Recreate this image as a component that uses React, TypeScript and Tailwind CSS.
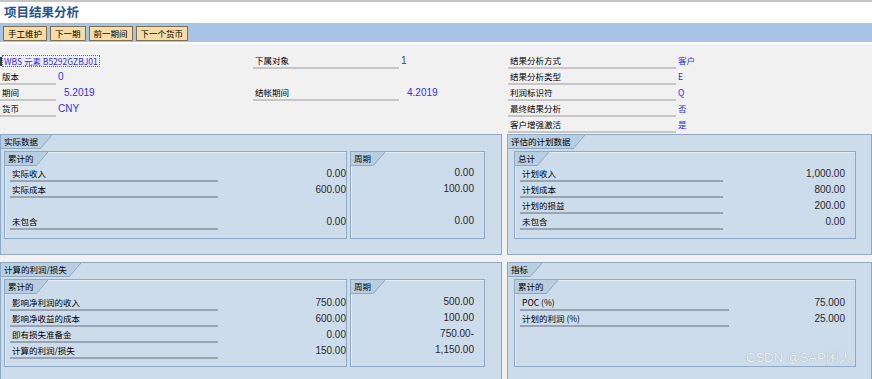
import React from 'react';

const cjk = "font-['Noto_Sans_CJK_SC',sans-serif]";
const num = "font-['Liberation_Sans',sans-serif]";

function Tab({ label }: { label: string }) {
  return (
    <div className="flex h-[14px]">
      <div className={`${cjk} bg-[#b8cfe1] border-b border-[#8fa8c3] pl-[3px] pr-[2px] text-[8.5px] leading-[13px] text-black whitespace-nowrap`}>
        {label}
      </div>
      <svg width="12" height="14" className="block">
        <polygon points="0,0 12,0 0,14" fill="#b8cfe1" />
        <line x1="12" y1="0" x2="0" y2="14" stroke="#8fa8c3" strokeWidth="1" />
      </svg>
    </div>
  );
}

function Line({ label, value, w = 208 }: { label: string; value?: string; w?: number }) {
  return (
    <div className="flex h-[16px] items-baseline">
      <div
        className={`${cjk} ml-[5px] h-[16px] shrink-0 border-b-2 border-[#98a4b0] pl-[2px] text-[8.5px] leading-[14px] text-black`}
        style={{ width: w }}
      >
        {label}
      </div>
      <div className={`${num} flex-1 text-right text-[10px] leading-[14px] text-[#2a2a2a]`}>{value}</div>
    </div>
  );
}

function Value({ v }: { v?: string }) {
  return <div className={`${num} h-[16px] text-right text-[10px] leading-[14px] text-[#2a2a2a]`}>{v}</div>;
}

function HeadRow({ label, value, w, vx = 2, sans = true }: { label?: string; value?: string; w: number; vx?: number; sans?: boolean }) {
  return (
    <div className="flex h-[16px] items-start">
      {label ? (
        <div
          className={`${cjk} h-[16px] shrink-0 border-b-2 border-[#c6c6c6] pl-[2px] text-[8.5px] leading-[14px] text-black`}
          style={{ width: w }}
        >
          {label}
        </div>
      ) : (
        <div className="h-[16px] shrink-0" style={{ width: w }} />
      )}
      <div
        className={`${sans ? num + ' pt-[1px] text-[10px]' : cjk + ' text-[8.5px]'} leading-[14px] text-[#2f2ff5]`}
        style={{ marginLeft: vx }}
      >
        {value}
      </div>
    </div>
  );
}

function Panel({ title, children, h }: { title: string; children: React.ReactNode; h: string }) {
  return (
    <div className={`${h} border border-[#8fa8c3] bg-[#cddcea]`}>
      <Tab label={title} />
      <div className="pt-[2px]">{children}</div>
    </div>
  );
}

function Box({ title, children, w, h }: { title?: string; children: React.ReactNode; w: number; h: number }) {
  return (
    <div className="border border-[#8fa8c3] shadow-[inset_1px_1px_0_#e4edf5]" style={{ width: w, height: h }}>
      {title ? <Tab label={title} /> : <div className="h-[14px]" />}
      <div>{children}</div>
    </div>
  );
}

export default function App() {
  return (
    <div className="relative h-[379px] w-[872px] overflow-hidden bg-[#f1f1f1]">
      {/* title */}
      <div className="h-[23px] border-t-2 border-[#c4c4c4] bg-white pl-[4px]">
        <div className={`${cjk} text-[12.5px] font-bold leading-[19px] text-[#245495]`}>项目结果分析</div>
      </div>
      {/* toolbar */}
      <div className="flex h-[21px] items-center gap-[3px] border-b-2 border-white bg-[#a7c3e6] pl-[3px] pt-[1px]">
        {['手工维护', '下一期', '前一期间', '下一个货币'].map((b) => (
          <div
            key={b}
            className={`${cjk} h-[15px] border border-[#7f6f50] bg-[#f6dca6] px-[4px] text-[8.5px] leading-[13px] text-black`}
          >
            {b}
          </div>
        ))}
      </div>

      {/* header form */}
      <div className="flex pt-[9px]">
        <div className="w-[253px]">
          <div className="flex h-[16px] items-center">
            <div className="h-[9px] w-[2px] bg-[#2a4a2a]" />
            <div className={`${cjk} border border-dotted border-[#5566aa] px-[1px] text-[8.5px] leading-[10px] text-[#2f2ff5]`}>
              WBS 元素 B5292GZBJ01
            </div>
          </div>
          <HeadRow label="版本" value="0" w={56} />
          <HeadRow label="期间" value="5.2019" w={56} vx={8} />
          <HeadRow label="货币" value="CNY" w={56} />
        </div>
        <div className="w-[255px]">
          <HeadRow label="下属对象" value="1" w={146} />
          <HeadRow w={146} />
          <HeadRow label="结帐期间" value="4.2019" w={146} vx={8} />
        </div>
        <div className="flex-1">
          <HeadRow label="结果分析方式" value="客户" w={168} sans={false} />
          <HeadRow label="结果分析类型" value="E" w={168} sans={false} />
          <HeadRow label="利润标识符" value="Q" w={168} sans={false} />
          <HeadRow label="最终结果分析" value="否" w={168} sans={false} />
          <HeadRow label="客户增强激活" value="是" w={168} sans={false} />
        </div>
      </div>

      {/* top panels */}
      <div className="mt-[1px] flex gap-[5px]">
        <div className="w-[502px]">
          <Panel title="实际数据" h="h-[121px]">
            <div className="flex gap-[3px] pl-[3px]">
              <Box title="累计的" w={343} h={88}>
                <Line label="实际收入" value="0.00" />
                <Line label="实际成本" value="600.00" />
                <div className="h-[16px]" />
                <Line label="未包含" value="0.00" />
              </Box>
              <Box title="周期" w={135} h={88}>
                <div className="pr-[10px]">
                  <Value v="0.00" />
                  <Value v="100.00" />
                  <Value />
                  <Value v="0.00" />
                </div>
              </Box>
            </div>
          </Panel>
        </div>
        <div className="flex-1">
          <Panel title="评估的计划数据" h="h-[121px]">
            <div className="pl-[6px]">
              <Box title="总计" w={342} h={88}>
                <div className="pr-[10px]">
                  <Line label="计划收入" value="1,000.00" w={203} />
                  <Line label="计划成本" value="800.00" w={203} />
                  <Line label="计划的损益" value="200.00" w={203} />
                  <Line label="未包含" value="0.00" w={203} />
                </div>
              </Box>
            </div>
          </Panel>
        </div>
      </div>

      {/* bottom panels */}
      <div className="mt-[7px] flex gap-[5px]">
        <div className="w-[502px]">
          <Panel title="计算的利润/损失" h="h-[130px]">
            <div className="flex gap-[3px] pl-[3px]">
              <Box title="累计的" w={343} h={88}>
                <div className="pt-[1px]">
                  <Line label="影响净利润的收入" value="750.00" />
                  <Line label="影响净收益的成本" value="600.00" />
                  <Line label="即有损失准备金" value="0.00" />
                  <Line label="计算的利润/损失" value="150.00" />
                </div>
              </Box>
              <Box title="周期" w={135} h={88}>
                <div className="pr-[10px] pt-[1px]">
                  <Value v="500.00" />
                  <Value v="100.00" />
                  <Value v="750.00-" />
                  <Value v="1,150.00" />
                </div>
              </Box>
            </div>
          </Panel>
        </div>
        <div className="flex-1">
          <Panel title="指标" h="h-[130px]">
            <div className="pl-[6px]">
              <Box title="累计的" w={342} h={88}>
                <div className="pr-[10px] pt-[1px]">
                  <Line label="POC (%)" value="75.000" w={209} />
                  <Line label="计划的利润 (%)" value="25.000" w={209} />
                </div>
              </Box>
            </div>
          </Panel>
        </div>
      </div>

      <div className={`${num} absolute left-[746px] top-[350px] text-[13px] leading-[16px] text-[#eef2f6] [text-shadow:0_0_1px_#8a96a4]`}>
        CSDN @SAP闲人
      </div>
    </div>
  );
}
